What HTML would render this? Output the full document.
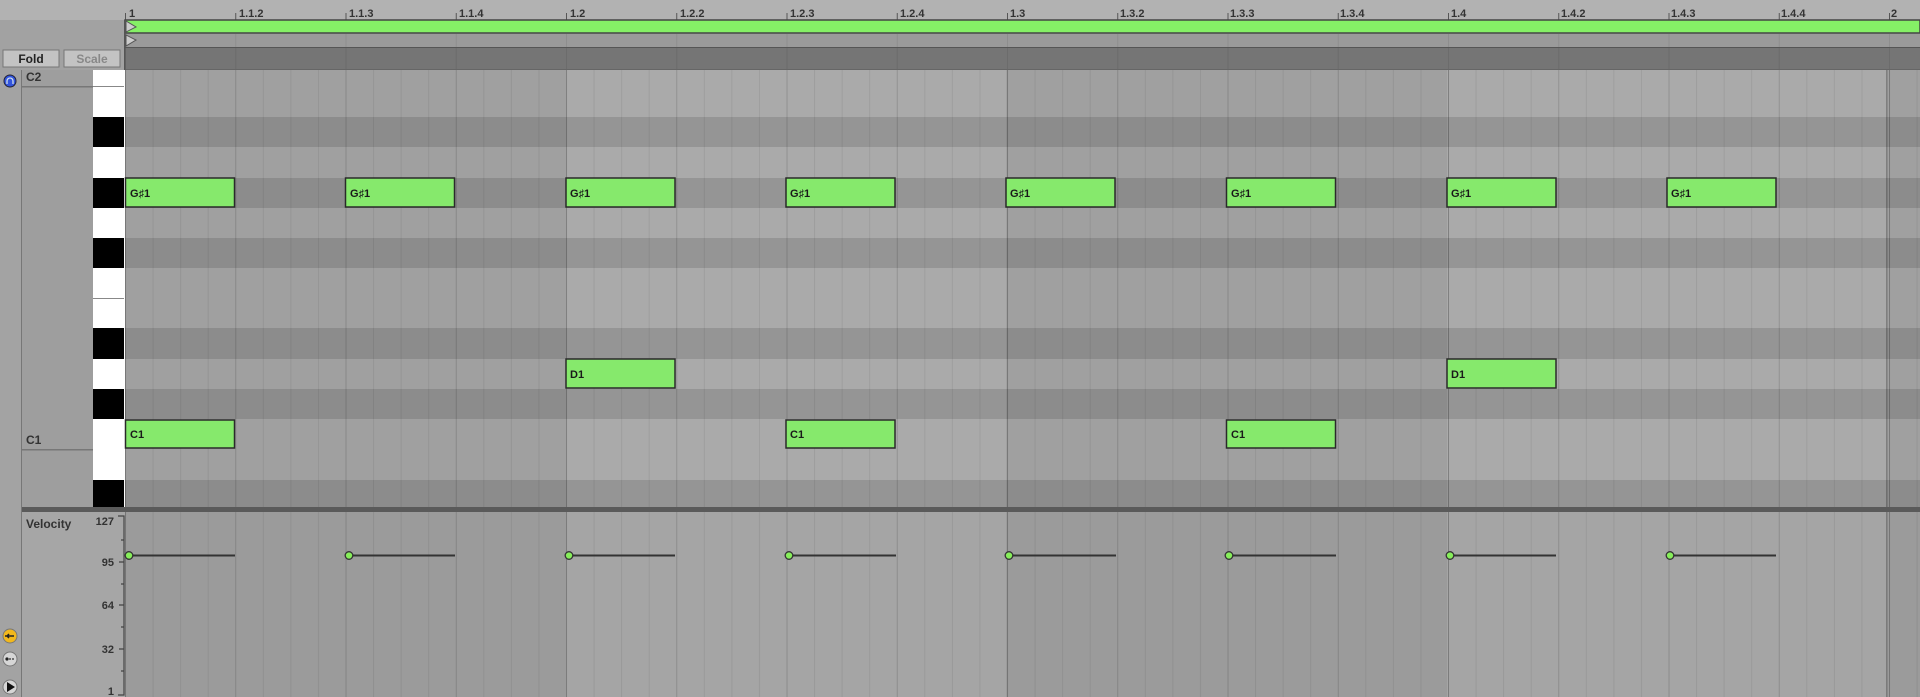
<!DOCTYPE html>
<html><head><meta charset="utf-8"><style>
html,body{margin:0;padding:0;background:#a5a5a5;}
svg{display:block;font-family:"Liberation Sans",sans-serif;}
.r{font-size:11px;fill:#333;font-weight:bold;}
.n{font-size:11px;fill:#1a1a1a;font-weight:bold;}
.v{font-size:11px;fill:#333;font-weight:bold;text-anchor:end;}
</style></head><body>
<svg width="1920" height="697" viewBox="0 0 1920 697" xmlns="http://www.w3.org/2000/svg">
<defs>
<pattern id="g64" x="125" y="0" width="27.5625" height="10" patternUnits="userSpaceOnUse"><rect width="1" height="10" fill="rgba(0,0,0,0.07)"/></pattern>
<pattern id="g16" x="125" y="0" width="110.25" height="10" patternUnits="userSpaceOnUse"><rect width="1" height="10" fill="rgba(0,0,0,0.08)"/></pattern>
<pattern id="gb" x="125" y="0" width="441" height="10" patternUnits="userSpaceOnUse"><rect width="1" height="10" fill="rgba(0,0,0,0.12)"/></pattern>
<pattern id="tk" x="125" y="0" width="110.25" height="10" patternUnits="userSpaceOnUse"><rect width="1" height="10" fill="#555"/></pattern>
</defs>
<!-- header -->
<rect x="0" y="0" width="1920" height="20" fill="#b2b2b2"/>
<rect x="0" y="20" width="125" height="50" fill="#a2a2a2"/>
<rect x="125" y="13" width="1795" height="7" fill="url(#tk)"/>
<g class="r">
<text x="129" y="17">1</text><text x="239" y="17">1.1.2</text><text x="349" y="17">1.1.3</text><text x="459" y="17">1.1.4</text>
<text x="570" y="17">1.2</text><text x="680" y="17">1.2.2</text><text x="790" y="17">1.2.3</text><text x="900" y="17">1.2.4</text>
<text x="1010" y="17">1.3</text><text x="1120" y="17">1.3.2</text><text x="1230" y="17">1.3.3</text><text x="1340" y="17">1.3.4</text>
<text x="1451" y="17">1.4</text><text x="1561" y="17">1.4.2</text><text x="1671" y="17">1.4.3</text><text x="1781" y="17">1.4.4</text>
<text x="1891" y="17">2</text>
</g>
<rect x="125" y="20" width="1795" height="13" fill="#85f066" stroke="#444" stroke-width="1.5"/>
<rect x="125" y="34" width="1795" height="13" fill="#9a9a9a"/>
<rect x="125" y="47" width="1795" height="23" fill="#757575"/>
<rect x="125" y="34" width="1795" height="36" fill="url(#g16)"/>
<rect x="125" y="47" width="1795" height="1" fill="#555"/>
<rect x="125" y="69" width="1795" height="1" fill="#666"/>
<polygon points="126,21 136,27 126,32" fill="#ccc" stroke="#555"/>
<polygon points="126,35 136,40 126,46" fill="#ccc" stroke="#555"/>
<rect x="124" y="20" width="1.5" height="50" fill="#555"/>
<rect x="3" y="50" width="56" height="17" fill="#c3c3c3" stroke="#777"/>
<text x="31" y="63" text-anchor="middle" style="font-size:12px;fill:#222;font-weight:bold">Fold</text>
<rect x="64" y="50" width="56" height="17" fill="#c3c3c3" stroke="#777"/>
<text x="92" y="63" text-anchor="middle" style="font-size:12px;fill:#888;font-weight:bold">Scale</text>
<!-- left column -->
<rect x="0" y="70" width="21" height="627" fill="#a3a3a3"/>
<rect x="21" y="70" width="1.5" height="627" fill="#777"/>
<rect x="22" y="70" width="71" height="438" fill="#9e9e9e"/>
<rect x="22" y="86" width="71" height="1.5" fill="#777"/>
<rect x="22" y="449" width="71" height="1.5" fill="#777"/>
<text x="26" y="81" class="r" style="font-size:12px">C2</text>
<text x="26" y="444" class="r" style="font-size:12px">C1</text>
<circle cx="10" cy="81" r="6" fill="#3355dd" stroke="#223"/>
<path d="M7,84 v-3 a3,3 0 0 1 6,0 v3" stroke="#cde" stroke-width="1.3" fill="none"/>
<!-- keys -->
<rect x="93" y="70" width="32" height="438" fill="#fff"/>
<g fill="#000">
<rect x="93" y="117" width="31" height="30"/><rect x="93" y="178" width="31" height="30"/><rect x="93" y="238" width="31" height="30"/>
<rect x="93" y="328" width="31" height="31"/><rect x="93" y="389" width="31" height="30"/><rect x="93" y="480" width="31" height="28"/>
</g>
<rect x="93" y="86" width="31" height="1" fill="#888"/>
<rect x="93" y="298" width="31" height="1" fill="#888"/>
<!-- grid -->
<rect x="125" y="70" width="1795" height="438" fill="#aaaaaa"/>
<g fill="rgba(0,0,0,0.12)">
<rect x="125" y="117" width="1795" height="30"/><rect x="125" y="178" width="1795" height="30"/><rect x="125" y="238" width="1795" height="30"/>
<rect x="125" y="328" width="1795" height="31"/><rect x="125" y="389" width="1795" height="30"/><rect x="125" y="480" width="1795" height="28"/>
</g>
<g fill="rgba(0,0,0,0.055)">
<rect x="125" y="70" width="441" height="627"/><rect x="1006" y="70" width="441" height="627"/><rect x="1887" y="70" width="33" height="627"/>
</g>
<rect x="125" y="70" width="1795" height="627" fill="url(#g64)"/>
<rect x="125" y="70" width="1795" height="627" fill="url(#g16)"/>
<rect x="125" y="70" width="1795" height="627" fill="url(#gb)"/>
<rect x="1886" y="70" width="1.5" height="627" fill="rgba(0,0,0,0.25)"/>
<!-- notes -->
<g fill="#86e96c" stroke="#2a2a2a" stroke-width="1.5">
<rect x="125.5" y="178" width="109" height="29"/><rect x="345.5" y="178" width="109" height="29"/><rect x="566" y="178" width="109" height="29"/><rect x="786" y="178" width="109" height="29"/>
<rect x="1006" y="178" width="109" height="29"/><rect x="1226.5" y="178" width="109" height="29"/><rect x="1447" y="178" width="109" height="29"/><rect x="1667" y="178" width="109" height="29"/>
<rect x="566" y="359" width="109" height="29"/><rect x="1447" y="359" width="109" height="29"/>
<rect x="125.5" y="420" width="109" height="28"/><rect x="786" y="420" width="109" height="28"/><rect x="1226.5" y="420" width="109" height="28"/>
</g>
<g class="n">
<text x="130" y="197">G♯1</text><text x="350" y="197">G♯1</text><text x="570" y="197">G♯1</text><text x="790" y="197">G♯1</text>
<text x="1010" y="197">G♯1</text><text x="1231" y="197">G♯1</text><text x="1451" y="197">G♯1</text><text x="1671" y="197">G♯1</text>
<text x="570" y="378">D1</text><text x="1451" y="378">D1</text>
<text x="130" y="438">C1</text><text x="790" y="438">C1</text><text x="1231" y="438">C1</text>
</g>
<!-- separator -->
<rect x="22" y="507" width="1898" height="5" fill="#5a5a5a"/>
<!-- velocity -->
<rect x="22" y="512" width="103" height="185" fill="#a6a6a6"/>
<text x="26" y="528" class="r" style="font-size:12px">Velocity</text>
<g class="v">
<text x="114" y="525">127</text><text x="114" y="566">95</text><text x="114" y="609">64</text><text x="114" y="653">32</text><text x="114" y="695">1</text>
</g>
<path d="M118,516 H124 V695 H118 M119,562 H124 M119,605 H124 M119,649 H124 M121,540 H124 M121,584 H124 M121,627 H124 M121,671 H124" stroke="#444" stroke-width="1.2" fill="none"/>
<g stroke="#333" stroke-width="2">
<path d="M129,555.5H235 M349,555.5H455 M569,555.5H675 M789,555.5H896 M1009,555.5H1116 M1229,555.5H1336 M1450,555.5H1556 M1670,555.5H1776"/>
</g>
<g fill="#86ee5a" stroke="#333" stroke-width="1.3">
<circle cx="129" cy="555.5" r="3.8"/><circle cx="349" cy="555.5" r="3.8"/><circle cx="569" cy="555.5" r="3.8"/><circle cx="789" cy="555.5" r="3.8"/>
<circle cx="1009" cy="555.5" r="3.8"/><circle cx="1229" cy="555.5" r="3.8"/><circle cx="1450" cy="555.5" r="3.8"/><circle cx="1670" cy="555.5" r="3.8"/>
</g>
<!-- bottom-left icons -->
<circle cx="10" cy="636" r="7" fill="#f2b81c" stroke="#777"/>
<path d="M5,636 H14 M7,636 l2,-2 M7,636 l2,2" stroke="#222" stroke-width="1.5"/>
<circle cx="10" cy="659" r="7" fill="#d6d6d6" stroke="#777"/>
<path d="M6,659 H14" stroke="#333" stroke-width="1.2" stroke-dasharray="2,1"/><circle cx="7" cy="659" r="1.6" fill="#222"/>
<circle cx="10" cy="687" r="7" fill="#d6d6d6" stroke="#777"/>
<polygon points="7,682 15,687 7,692" fill="#111"/>
</svg>
</body></html>
